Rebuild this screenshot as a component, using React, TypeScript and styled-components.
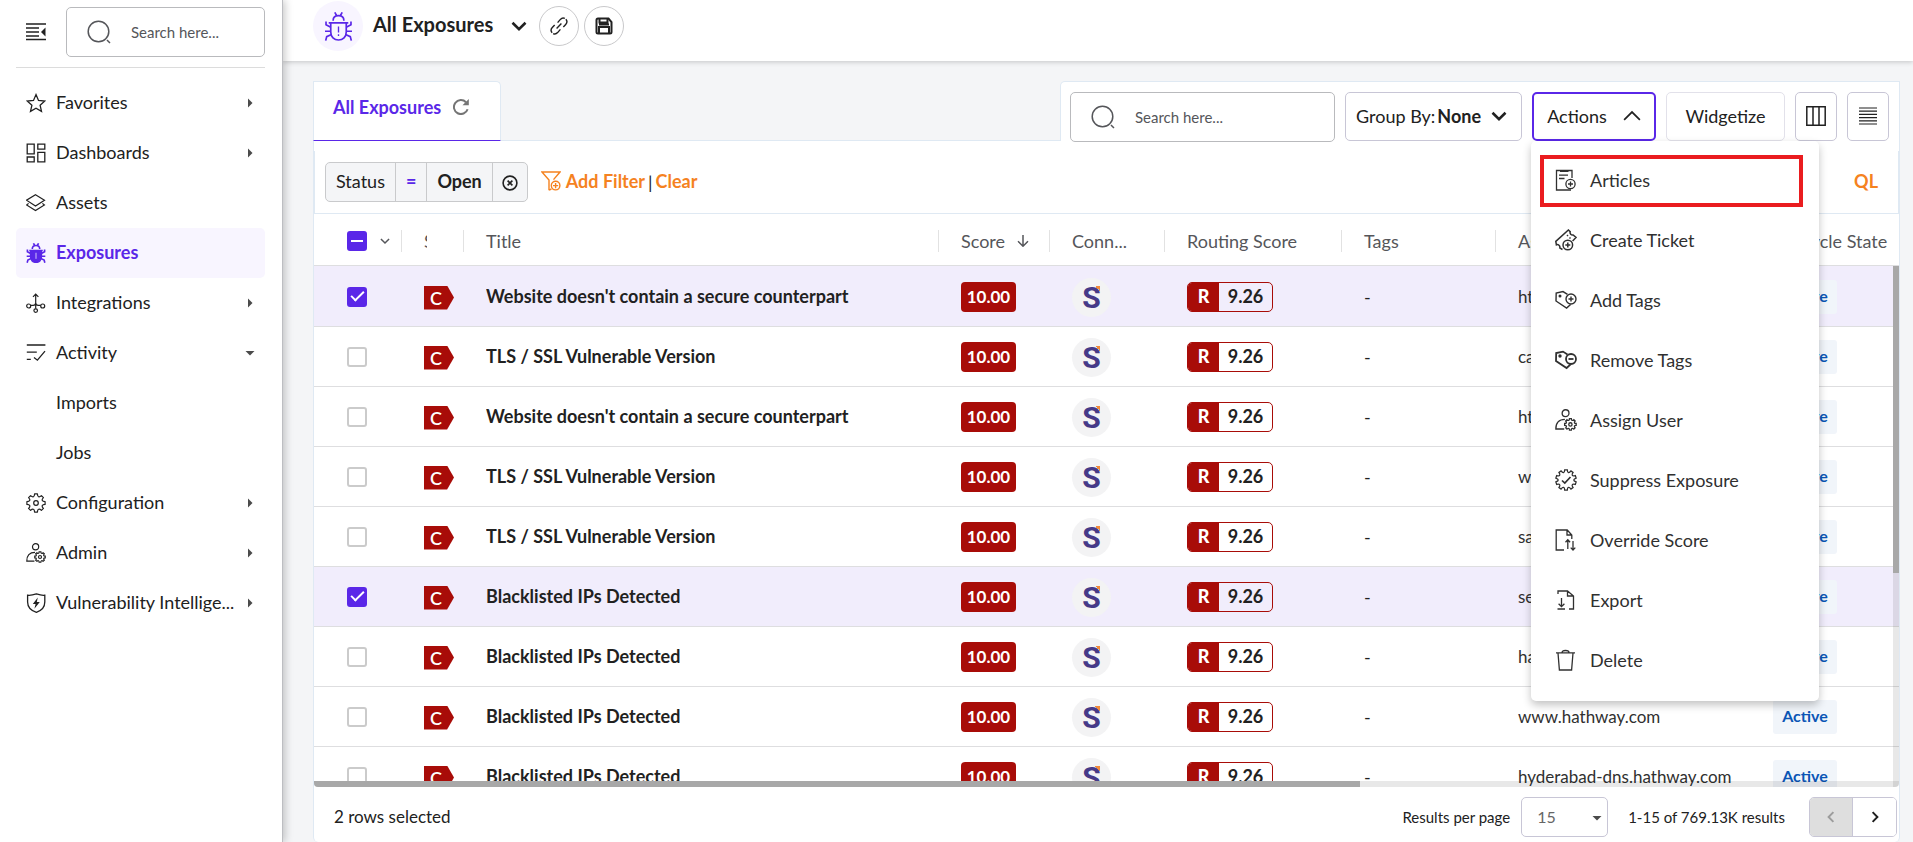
import React from "react";
import styled, { createGlobalStyle, css } from "styled-components";

const color = {
  purple: "#5a27e8",
  lilac: "#f8f5ff",
  rowOn: "#f1edfc",
  orange: "#f5821f",
  red: "#a80c08",
  ink: "#212121",
  soft: "#55565a",
  line: "#dedee0",
  pale: "#dfe9f3",
  page: "#f4f5f7",
};

const Global = createGlobalStyle`
  *, *::before, *::after { box-sizing: border-box; }
  html, body { margin: 0; padding: 0; }
  body { background: ${color.page}; overflow: hidden; }
  body, button, input, select { font-family: Lato, "Open Sans", sans-serif; color: ${color.ink}; }
  button { padding: 0; cursor: pointer; }
  svg { display: block; flex: none; }
`;

/* ---------- icons ---------- */

const gear = (teeth: number, outer: number, inner: number, cx = 10, cy = 10) => {
  const step = (Math.PI * 2) / teeth;
  const at = (r: number, a: number) =>
    `${(cx + r * Math.cos(a)).toFixed(2)} ${(cy + r * Math.sin(a)).toFixed(2)}`;
  let d = "";
  for (let i = 0; i < teeth; i++) {
    const a = i * step - Math.PI / 2;
    d += `${i ? "L" : "M"}${at(outer, a - step * 0.2)}L${at(outer, a + step * 0.2)}`;
    d += `Q${at(inner, a + step * 0.28)} ${at(inner, a + step * 0.5)}`;
    d += `Q${at(inner, a + step * 0.72)} ${at(outer, a + step * 0.8)}`;
  }
  return d + "Z";
};

type IconProps = { size?: number; children: React.ReactNode; width?: number; box?: string };
const Icon = ({ size = 20, children, width = 1.3, box = "0 0 20 20" }: IconProps) => (
  <svg width={size} height={size} viewBox={box} fill="none" stroke="currentColor" strokeWidth={width} aria-hidden="true">
    {children}
  </svg>
);

const FoldIcon = () => (
  <Icon width={1.4}>
    <path d="M0 2h20M0 6h13M0 10h13M0 14h13M0 17.5h20" />
    <path d="M19.5 5.5v9L15 10z" fill="currentColor" stroke="none" />
  </Icon>
);
const StarIcon = () => (
  <Icon><path d="M10 1.6l2.5 5.8 6.3.6-4.7 4.2 1.4 6.2L10 15.2l-5.5 3.2 1.4-6.2L1.2 8l6.3-.6z" /></Icon>
);
const BoardIcon = () => (
  <Icon><path d="M1.2 1.2h7v9.6h-7zM11.8 1.2h7v5h-7zM1.2 14h7v4.8h-7zM11.8 9.4h7v9.4h-7z" /></Icon>
);
const LayersIcon = () => (
  <Icon width={1.2}>
    <path d="M9.5 1.8l9 5.4-9 5.8-9-5.8z" />
    <path d="M2.6 10.4L.6 12l8.9 5.6 8.9-5.6-2-1.6" />
  </Icon>
);
const BugIcon = ({ size = 20, solid = false }: { size?: number; solid?: boolean }) => (
  <Icon size={size} box="-3 0 86 86" width={solid ? 7 : 5}>
    <path d="M29 1l5 9M51 1l-5 9M24 26c0-10 4-15 16-15s16 5 16 15" />
    <path d="M11 32h58M17 33v26c0 15 10 24 23 24s23-9 23-24V33" fill={solid ? "currentColor" : "none"} />
    <path d="M3 28v10l14 7M77 28v10l-14 7M0 57h16M64 57h16M19 67L5 73 2 85M61 67l14 6 3 12" />
    {solid ? <path d="M40 42v26" stroke="#d9cdfb" strokeWidth={4} /> : <path d="M40 43v18M40 66v5" strokeWidth={4} />}
  </Icon>
);
const NodesIcon = () => (
  <Icon width={1.2}>
    <circle cx="2.7" cy="13" r="2" /><circle cx="16.7" cy="13" r="2" /><circle cx="9.7" cy="17.6" r="1.8" />
    <path d="M9.7 15.8V1M7 3.8L9.700 1l2.700 2.800M4.700 12.400h2.400c2 0 2.600-1.200 2.600-2.600 0 1.400.6 2.600 2.600 2.600h2.400" />
  </Icon>
);
const ActivityIcon = () => (
  <Icon width={1.3}><path d="M.8 2h18.6M.8 9.2h10M.8 16.4h4M8 14.4l3.4 2.8 7.6-9" /></Icon>
);
const GearIcon = () => (
  <Icon width={1.2}><path d={gear(8, 9.2, 6.8)} strokeLinejoin="round" /><circle cx="10" cy="10" r="2.3" /></Icon>
);
const UserGearIcon = ({ size = 20 }: { size?: number }) => (
  <Icon width={1.2} size={size}>
    <circle cx="9.6" cy="3.8" r="3.1" />
    <path d="M8.4 18.2H.8C.6 12.6 3.6 9.4 9 9.4" />
    <path d={gear(8, 5.3, 4, 14, 14)} /><circle cx="14" cy="14" r="1.5" />
  </Icon>
);
const ShieldIcon = () => (
  <Icon>
    <path d="M1.6 2.2C4.6 2.6 7 2 10.4.9c3.4 1.1 5.8 1.7 8.4 1.3V9c0 5.6-3.4 8.6-8.4 10.3C5 17.6 1.6 14.6 1.6 9z" />
    <path d="M11.8 4.4L6.8 11h2.8L8.4 15.8 13.8 9h-3z" fill="currentColor" stroke="none" />
  </Icon>
);
const SearchIcon = () => (
  <Icon size={24} box="0 0 24 24" width={1.5}><circle cx="11.5" cy="11.5" r="10.3" /><path d="M20 20l3 3" /></Icon>
);
const Chevron = ({ size = 16, width = 2.6, up = false }: { size?: number; width?: number; up?: boolean }) => (
  <Icon size={size} box="0 0 16 16" width={width}><path d={up ? "M1 11.5l7-7 7 7" : "M1.5 4.8L8 11.2l6.5-6.4"} /></Icon>
);
const Caret = ({ open = false }: { open?: boolean }) => (
  <Icon size={10} box="0 0 10 10"><path d={open ? "M.5 3h9L5 7.5z" : "M3 .5v9L7.5 5z"} fill="#4b4b4b" stroke="none" /></Icon>
);
const LinkIcon = () => (
  <Icon size={18} box="0 0 18 18" width={1.4}>
    <path d="M7.6 5.6l2.8-3.2c1.5-1.6 3.8-1.7 5.3-.3 1.5 1.5 1.4 3.8 0 5.3l-2.8 3M10.4 12.4l-2.8 3.2c-1.5 1.6-3.8 1.7-5.3.3-1.5-1.5-1.4-3.8 0-5.3l2.8-3M6.6 11.4l4.8-4.8" strokeDasharray="9 1.2" />
  </Icon>
);
const SaveIcon = () => (
  <Icon size={18} box="0 0 18 18" width={2}>
    <path d="M1.5 3c0-1 .5-1.5 1.5-1.5h10.5L16.5 5v10c0 1-.5 1.5-1.5 1.5H3c-1 0-1.5-.5-1.5-1.5z" />
    <path d="M4.5 2v3.5h8V2M4 16v-6h10v6M4 7.5h10" />
  </Icon>
);
const RefreshIcon = () => (
  <Icon size={16} box="0 0 16 16" width={2}>
    <path d="M14.6 10.2A7 7 0 1 1 13 3.2" /><path d="M15.8 0v6.3H9.5z" fill="currentColor" stroke="none" />
  </Icon>
);
const FilterIcon = () => (
  <Icon width={1.4}>
    <path d="M8 19.2V9L1 1h18l-6.5 7.6M8 19.2l2.4-1.2" /><circle cx="14.6" cy="14.6" r="4.3" /><path d="M12 14.6h5.2M14.6 12v5.2" />
  </Icon>
);
const RemoveIcon = () => (
  <Icon size={16} box="0 0 16 16" width={1.6}><circle cx="8" cy="8" r="6.9" /><path d="M5.6 5.6l4.8 4.8M10.4 5.6l-4.8 4.8" /></Icon>
);
const SortIcon = () => (
  <Icon size={12} box="0 0 12 12" width={1.5}><path d="M6 0v11M1 6.2l5 5 5-5" /></Icon>
);
const ColumnsIcon = () => (
  <Icon width={1.5}><path d="M.8.8h18.4v18.4H.8zM7 1v18M13 1v18" /></Icon>
);
const RowsIcon = () => (
  <Icon size={18} box="0 0 18 18" width={1.2}><path d="M0 1h18M0 4.2h18M0 7.4h18M0 10.6h18M0 13.8h18M0 17h18" /></Icon>
);
const ArticleIcon = () => (
  <Icon size={22} box="0 0 22 22">
    <path d="M17 9V1.5H1.5V21H16M4 6.2h9M4 9.5h5.5" /><path d="M5 2h8.5" strokeWidth={2} />
    <circle cx="15.5" cy="15" r="4.6" /><path d="M13 15h5M15.5 12.5v5" />
  </Icon>
);
const TicketIcon = () => (
  <Icon size={22} box="0 0 22 22" width={1.5}>
    <path d="M7.5 20.5l-2.7-1.6c.6-2-1.6-4-3.4-3L.8 12.400 13.400 1l1.800 1.800c-.6 1.800 1 3.700 3 3.200l2.800 2.400-3.400 3.600M12 6l1 1M14.500 8.500l1 1" />
    <circle cx="12.8" cy="16" r="4.8" /><path d="M10.3 16h5M12.8 13.5v5" />
  </Icon>
);
const TagIcon = ({ minus = false }: { minus?: boolean }) => (
  <Icon size={22} box="0 0 22 22" width={minus ? 1.8 : 1.4}>
    <path d="M12.5 5.4L8 2.6 1.2 4 1 12l10.6 7 4-3.6" /><circle cx="5" cy="7" r=".8" fill="currentColor" />
    <circle cx="16" cy="10" r="5" /><path d={minus ? "M13.5 10h5" : "M13.5 10h5M16 7.5v5"} />
  </Icon>
);
const BadgeIcon = () => (
  <Icon size={22} box="0 0 22 22"><path d={gear(10, 10.3, 7.8, 11, 11)} /><path d="M7 11.5l2.8 2.6L15.5 8" strokeWidth={1.7} /></Icon>
);
const OverrideIcon = () => (
  <Icon size={22} box="0 0 22 22">
    <path d="M9 21H1.2V1h11l4.6 5v4M12 1v5h5M12.8 20v-9M10.5 13.3l2.3-2.5 2.3 2.5M18 12v9M15.7 18.6L18 21l2.3-2.4" />
  </Icon>
);
const ExportIcon = () => (
  <Icon size={22} box="0 0 22 22">
    <path d="M3 5V2h9.5l6 5v13H14M12.5 2v5h6M6.5 9v8.5M3.6 14.8l2.9 2.8 2.9-2.8M2.5 20H10" />
  </Icon>
);
const TrashIcon = () => (
  <Icon size={22} box="0 0 22 22"><path d="M1 3.8h19M7 3.6C7 2 8 1.5 10.5 1.5S14 2 14 3.6M3 4l1.4 17h12.2L18 4" /></Icon>
);

/* ---------- shell ---------- */

const Shell = styled.div`
  display: flex;
  height: 100vh;
  min-width: 1280px;
`;
const Sidebar = styled.nav`
  flex: 0 0 283px;
  min-width: 0;
  padding: 7px 17px 0 16px;
  background: #fff;
  border-right: 1px solid #bdbec2;
  box-shadow: 2px 0 8px rgba(0, 0, 0, 0.22);
  z-index: 3;
`;
const SideTop = styled.div`
  display: flex;
  align-items: center;
  gap: 20px;
  padding: 0 0 10px 10px;
  margin-bottom: 10px;
  border-bottom: 1px solid #dcdcdc;
`;
const PlainButton = styled.button`
  border: 0;
  background: none;
  color: inherit;
`;
const Search = styled.label<{ $width?: number }>`
  display: flex;
  align-items: center;
  flex: ${(p) => (p.$width ? `0 0 ${p.$width}px` : "1")};
  min-width: 0;
  height: 50px;
  padding: 0 20px;
  gap: 20px;
  background: #fff;
  border: 1px solid #b9babd;
  border-radius: 5px;
  color: ${color.soft};
  input {
    flex: 1;
    min-width: 0;
    border: 0;
    padding: 0;
    outline: 0;
    background: none;
    font-size: 15px;
  }
  input::placeholder { color: ${color.soft}; opacity: 1; }
`;
const NavList = styled.ul`
  list-style: none;
  margin: 0;
  padding: 0;
`;
const NavLink = styled.a<{ $active?: boolean }>`
  display: flex;
  align-items: center;
  gap: 10px;
  height: 50px;
  padding: 0 10px;
  border-radius: 5px;
  font-size: 18px;
  text-decoration: none;
  color: ${color.ink};
  ${(p) => p.$active && css`
    background: ${color.lilac};
    color: ${color.purple};
    font-weight: 700;
  `}
`;
const NavIcon = styled.span`
  flex: 0 0 20px;
`;
const NavText = styled.span`
  padding-bottom: 2px;
  white-space: nowrap;
`;
const NavCaret = styled.span`
  margin-left: auto;
`;
const Content = styled.div`
  flex: 1;
  min-width: 0;
  display: flex;
  flex-direction: column;
`;
const Header = styled.header`
  display: flex;
  align-items: center;
  flex: 0 0 61px;
  padding: 0 30px 9px;
  background: #fff;
  box-shadow: 0 1px 5px rgba(0, 0, 0, 0.2);
  z-index: 1;
`;
const BugDisc = styled.span`
  display: grid;
  place-items: center;
  width: 50px;
  height: 50px;
  border-radius: 50%;
  background: ${color.lilac};
  color: ${color.purple};
`;
const PageTitle = styled.h1`
  margin: 0 18px 4px 10px;
  font-size: 20px;
  font-weight: 700;
  line-height: 24px;
`;
const RoundButton = styled.button`
  display: grid;
  place-items: center;
  width: 40px;
  height: 40px;
  border: 1px solid #c9c9cb;
  border-radius: 50%;
  background: #fff;
`;
const RoundGroup = styled.div`
  display: flex;
  gap: 5px;
  margin-left: 12px;
`;
const Main = styled.main`
  flex: 1;
  min-height: 0;
  display: flex;
  flex-direction: column;
  padding: 20px 13px 0 30px;
`;

/* ---------- tabs and toolbar ---------- */

const TopRow = styled.div`
  display: flex;
  flex: 0 0 60px;
  min-height: 0;
`;
const Tab = styled.button`
  display: flex;
  align-items: center;
  gap: 12px;
  padding: 0 31px 8px 19px;
  background: #fff;
  border: 1px solid ${color.pale};
  border-bottom: 1px solid ${color.purple};
  border-top-right-radius: 5px;
  color: ${color.purple};
  font-size: 18px;
  font-weight: 700;
  svg { color: #757575; }
`;
const TabFill = styled.div`
  flex: 1;
  border-bottom: 1px solid ${color.pale};
`;
const Toolbar = styled.div`
  position: relative;
  display: flex;
  align-items: flex-start;
  gap: 10px;
  padding: 10px 10px 0 9px;
  background: #fff;
  border: 1px solid ${color.pale};
  border-bottom: 0;
  border-top-left-radius: 5px;
`;
const ToolButton = styled.button<{ $width: number; $tone?: "active" | "faint" }>`
  display: flex;
  align-items: center;
  justify-content: center;
  flex: 0 0 ${(p) => p.$width}px;
  height: 49px;
  padding-bottom: 2px;
  background: #fff;
  border: 1px solid #c8c6d6;
  border-radius: 5px;
  font-size: 18px;
  white-space: nowrap;
  ${(p) => p.$tone === "active" && css`border: 2px solid ${color.purple};`}
  ${(p) => p.$tone === "faint" && css`border-color: #e2e1ea;`}
  b { margin: 0 10px 0 2px; }
`;
const GroupButton = styled(ToolButton)`
  justify-content: flex-start;
  padding-left: 10px;
`;
const ActionsLabel = styled.span`
  margin-right: 16px;
`;
const ActionsWrap = styled.div`
  position: relative;
  display: flex;
`;
const Menu = styled.ul`
  position: absolute;
  z-index: 2;
  top: 49px;
  left: -1px;
  width: 288px;
  margin: 0;
  padding: 10px 9px;
  list-style: none;
  background: #fff;
  border-radius: 5px;
  box-shadow: 0 4px 8px rgba(0, 0, 0, 0.24);
`;
const MenuRow = styled.li`
  padding: 4px 0;
`;
const MenuItem = styled.button<{ $marked?: boolean }>`
  display: flex;
  align-items: center;
  gap: 13px;
  width: 263px;
  height: 52px;
  padding: 0 0 2px 11px;
  border: 4px solid ${(p) => (p.$marked ? "#ea1c1f" : "transparent")};
  background: none;
  font-size: 18px;
  color: #303030;
`;

/* ---------- panel ---------- */

const Panel = styled.section`
  flex: 1;
  min-height: 0;
  display: flex;
  flex-direction: column;
  background: #fff;
  border: 1px solid ${color.pale};
  border-width: 0 1px;
  border-radius: 0 0 5px 5px;
`;
const FilterBar = styled.div`
  display: flex;
  align-items: center;
  flex: 0 0 63px;
  margin-top: 10px;
  padding: 0 20px 0 10px;
  border: 1px solid ${color.pale};
  border-top: 0;
  font-size: 18px;
`;
const Chip = styled.div`
  display: flex;
  height: 40px;
  background: ${color.page};
  border: 1px solid #c9cacc;
  border-radius: 5px;
`;
const ChipPart = styled.span<{ $strong?: boolean }>`
  display: flex;
  align-items: center;
  padding: 0 10px 2px;
  border-right: 1px solid #c9cacc;
  font-weight: ${(p) => (p.$strong ? 700 : 400)};
`;
const ChipOperator = styled(ChipPart)`
  color: ${color.purple};
  font-weight: 700;
`;
const ChipRemove = styled(PlainButton)`
  padding: 2px 9px 0;
`;
const OrangeButton = styled(PlainButton)`
  display: flex;
  align-items: center;
  gap: 5px;
  padding-bottom: 2px;
  color: ${color.orange};
  font-size: 18px;
  font-weight: 700;
`;
const FilterLinks = styled.div`
  display: flex;
  align-items: center;
  gap: 3px;
  margin-left: 13px;
  flex: 1;
`;

const TableArea = styled.div`
  position: relative;
  flex: 1;
  min-height: 0;
  overflow: hidden;
  border-radius: 0 0 4px 4px;
`;
const Grid = styled.table`
  width: 100%;
  table-layout: fixed;
  border-collapse: separate;
  border-spacing: 0;
  font-size: 18px;
`;
const HeadCell = styled.th<{ $divided?: boolean }>`
  height: 52px;
  padding: 2px 0 0;
  border-bottom: 1px solid ${color.line};
  font-weight: 400;
  text-align: left;
  color: ${color.soft};
  white-space: nowrap;
  > div {
    display: flex;
    align-items: center;
    gap: 12px;
    height: 22px;
    padding-left: 22px;
    line-height: 22px;
    border-right: 1px solid ${(p) => (p.$divided ? "#e2e2e2" : "transparent")};
  }
`;
const Clipped = styled.span<{ $width: number }>`
  width: ${(p) => p.$width}px;
  overflow: hidden;
  text-overflow: clip;
`;
const Row = styled.tr<{ $on: boolean; $first: boolean }>`
  background: ${(p) => (p.$on ? color.rowOn : "#fff")};
  td {
    height: 60px;
    padding: 0 0 0 22px;
    border-top: 1px solid ${(p) => (p.$first ? color.rowOn : color.line)};
    white-space: nowrap;
  }
`;
const CheckCell = styled.div`
  display: flex;
  align-items: center;
  gap: 13px;
  padding-left: 11px;
`;
const CheckBox = styled.input<{ $mixed?: boolean }>`
  appearance: none;
  display: grid;
  place-items: center;
  flex: none;
  width: 20px;
  height: 20px;
  margin: 0;
  border: 2px solid #cbcbcb;
  border-radius: 3px;
  background: #fff;
  &:checked {
    background: ${color.purple};
    border-color: ${color.purple};
  }
  &:checked::before {
    content: "";
    ${(p) => p.$mixed
      ? css`width: 12px; height: 2px; background: #fff;`
      : css`width: 13px; height: 7px; margin-bottom: 4px; border: solid #fff; border-width: 0 0 2px 2px; transform: rotate(-45deg);`}
  }
`;
const Severity = styled.span`
  display: block;
  width: 30px;
  height: 24px;
  margin-top: 2px;
  padding-left: 6px;
  background: ${color.red};
  color: #fff;
  font-size: 18px;
  font-weight: 600;
  line-height: 24px;
  clip-path: polygon(0 0, 77% 0, 100% 50%, 77% 100%, 0 100%);
`;
const Title = styled.span`
  display: block;
  padding-bottom: 2px;
  font-weight: 700;
  overflow: hidden;
  text-overflow: ellipsis;
`;
const Score = styled.span`
  display: grid;
  place-items: center;
  width: 55px;
  height: 30px;
  padding-bottom: 1px;
  border-radius: 4px;
  background: ${color.red};
  color: #fff;
  font-size: 17px;
  font-weight: 700;
`;
const Connector = styled.span`
  position: relative;
  display: grid;
  place-items: center;
  width: 39px;
  height: 39px;
  margin-top: 2px;
  border-radius: 50%;
  background: #f3f3f4;
  color: #463a88;
  font-family: Roboto, "Liberation Sans", sans-serif;
  font-size: 30px;
  font-weight: 700;
  line-height: 39px;
  &::after {
    content: "";
    position: absolute;
    top: 8px;
    right: 11px;
    width: 5px;
    height: 5px;
    background: linear-gradient(to bottom left, #f08a3c 50%, transparent 50%);
  }
`;
const Routing = styled.span`
  display: flex;
  width: 86px;
  height: 30px;
  border: 1px solid ${color.red};
  border-radius: 5px;
  font-weight: 700;
  line-height: 26px;
  overflow: hidden;
  text-align: center;
  b {
    flex: 0 0 31px;
    background: ${color.red};
    color: #fff;
  }
  span { flex: 1; }
`;
const Asset = styled.span`
  display: block;
  padding-bottom: 1px;
  font-size: 17px;
  color: #303030;
`;
const State = styled.span`
  display: grid;
  place-items: center;
  width: 64px;
  height: 34px;
  padding-bottom: 2px;
  border-radius: 3px;
  background: #f1f5fa;
  color: #0b55b5;
  font-size: 16px;
  font-weight: 700;
`;
const ScrollTrack = styled.div<{ $axis: "x" | "y" }>`
  position: absolute;
  right: 0;
  bottom: 0;
  background: rgba(0, 0, 0, 0.09);
  ${(p) => (p.$axis === "x" ? "left: 0; height: 6px;" : "top: 52px; width: 6px;")}
`;
const ScrollThumb = styled.div<{ $axis: "x" | "y" }>`
  background: #a8a8a8;
  ${(p) => (p.$axis === "x" ? "width: 66%; height: 6px;" : "width: 6px; height: 59%;")}
`;

const Footer = styled.footer`
  display: flex;
  align-items: center;
  flex: 0 0 55px;
  padding: 4px 2px 0 20px;
  font-size: 15px;
`;
const Selected = styled.span`
  flex: 1;
  font-size: 17px;
`;
const SizeLabel = styled.label`
  display: flex;
  align-items: center;
  gap: 11px;
`;
const SelectBox = styled.span`
  position: relative;
  svg {
    position: absolute;
    top: 16px;
    right: 6px;
    pointer-events: none;
  }
`;
const SizeSelect = styled.select`
  appearance: none;
  width: 87px;
  height: 40px;
  padding: 0 15px;
  background: #fff;
  border: 1px solid #c8c6d6;
  border-radius: 5px;
  color: #666;
  font-size: 16px;
`;
const Range = styled.span`
  margin: 0 24px 0 20px;
`;
const Pager = styled.div`
  display: flex;
  height: 40px;
  border: 1px solid #c8c6d6;
  border-radius: 5px;
  overflow: hidden;
`;
const PageButton = styled.button`
  display: grid;
  place-items: center;
  width: 43px;
  border: 0;
  background: #fff;
  &:disabled { background: #dedede; color: #9d9d9d; border-right: 1px solid #c8c6d6; }
  svg { transform: rotate(-90deg); }
  &:disabled svg { transform: rotate(90deg); }
`;

/* ---------- data ---------- */

type Nav = { label: string; icon?: React.ReactNode; caret?: "closed" | "open"; active?: boolean };
const nav: Nav[] = [
  { label: "Favorites", icon: <StarIcon />, caret: "closed" },
  { label: "Dashboards", icon: <BoardIcon />, caret: "closed" },
  { label: "Assets", icon: <LayersIcon /> },
  { label: "Exposures", icon: <BugIcon solid />, active: true },
  { label: "Integrations", icon: <NodesIcon />, caret: "closed" },
  { label: "Activity", icon: <ActivityIcon />, caret: "open" },
  { label: "Imports" },
  { label: "Jobs" },
  { label: "Configuration", icon: <GearIcon />, caret: "closed" },
  { label: "Admin", icon: <UserGearIcon />, caret: "closed" },
  { label: "Vulnerability Intellige...", icon: <ShieldIcon />, caret: "closed" },
];

const actions: [string, React.ReactNode][] = [
  ["Articles", <ArticleIcon />],
  ["Create Ticket", <TicketIcon />],
  ["Add Tags", <TagIcon />],
  ["Remove Tags", <TagIcon minus />],
  ["Assign User", <UserGearIcon size={22} />],
  ["Suppress Exposure", <BadgeIcon />],
  ["Override Score", <OverrideIcon />],
  ["Export", <ExportIcon />],
  ["Delete", <TrashIcon />],
];

const website = "Website doesn't contain a secure counterpart";
const tls = "TLS / SSL Vulnerable Version";
const blacklisted = "Blacklisted IPs Detected";
const rows: { title: string; asset: string; on?: boolean }[] = [
  { title: website, asset: "https", on: true },
  { title: tls, asset: "cas" },
  { title: website, asset: "https" },
  { title: tls, asset: "www" },
  { title: tls, asset: "sa" },
  { title: blacklisted, asset: "se", on: true },
  { title: blacklisted, asset: "ha" },
  { title: blacklisted, asset: "www.hathway.com" },
  { title: blacklisted, asset: "hyderabad-dns.hathway.com" },
];
const widths = [88, 62, 0, 111, 115, 177, 154, 255, 148];

export default function App() {
  return (
    <>
      <Global />
      <Shell>
        <Sidebar>
          <SideTop>
            <PlainButton aria-label="Collapse menu"><FoldIcon /></PlainButton>
            <Search><SearchIcon /><input type="search" placeholder="Search here..." aria-label="Search menu" /></Search>
          </SideTop>
          <NavList>
            {nav.map((n) => (
              <li key={n.label}>
                <NavLink href="#" $active={n.active}>
                  <NavIcon>{n.icon}</NavIcon>
                  <NavText>{n.label}</NavText>
                  {n.caret && <NavCaret><Caret open={n.caret === "open"} /></NavCaret>}
                </NavLink>
              </li>
            ))}
          </NavList>
        </Sidebar>
        <Content>
          <Header>
            <BugDisc><BugIcon size={29} /></BugDisc>
            <PageTitle>All Exposures</PageTitle>
            <PlainButton aria-label="Choose view"><Chevron /></PlainButton>
            <RoundGroup>
              <RoundButton aria-label="Copy link"><LinkIcon /></RoundButton>
              <RoundButton aria-label="Save view"><SaveIcon /></RoundButton>
            </RoundGroup>
          </Header>
          <Main>
            <TopRow>
              <Tab>All Exposures <RefreshIcon /></Tab>
              <TabFill />
              <Toolbar>
                <Search $width={265}><SearchIcon /><input type="search" placeholder="Search here..." aria-label="Search exposures" /></Search>
                <GroupButton $width={177}>Group By:<b>None</b><Chevron /></GroupButton>
                <ActionsWrap>
                  <ToolButton $width={124} $tone="active" aria-expanded="true">
                    <ActionsLabel>Actions</ActionsLabel><Chevron up width={1.5} size={18} />
                  </ToolButton>
                  <Menu>
                    {actions.map(([label, icon], i) => (
                      <MenuRow key={label}><MenuItem $marked={i === 0}>{icon}{label}</MenuItem></MenuRow>
                    ))}
                  </Menu>
                </ActionsWrap>
                <ToolButton $width={119} $tone="faint">Widgetize</ToolButton>
                <ToolButton $width={42} aria-label="Columns"><ColumnsIcon /></ToolButton>
                <ToolButton $width={42} aria-label="Row density"><RowsIcon /></ToolButton>
              </Toolbar>
            </TopRow>
            <Panel>
              <FilterBar>
                <Chip>
                  <ChipPart>Status</ChipPart>
                  <ChipOperator>=</ChipOperator>
                  <ChipPart $strong>Open</ChipPart>
                  <ChipRemove aria-label="Remove filter"><RemoveIcon /></ChipRemove>
                </Chip>
                <FilterLinks>
                  <OrangeButton><FilterIcon />Add Filter</OrangeButton>
                  <span>|</span>
                  <OrangeButton>Clear</OrangeButton>
                </FilterLinks>
                <OrangeButton>QL</OrangeButton>
              </FilterBar>
              <TableArea>
                <Grid>
                  <colgroup>
                    {widths.map((w, i) => <col key={i} width={w || undefined} />)}
                  </colgroup>
                  <thead>
                    <tr>
                      <HeadCell $divided>
                        <div>
                          <CheckCell>
                            <CheckBox type="checkbox" defaultChecked $mixed aria-label="Select all rows" />
                            <Chevron size={10} width={2.4} />
                          </CheckCell>
                        </div>
                      </HeadCell>
                      <HeadCell $divided><div><Clipped $width={3}>S</Clipped></div></HeadCell>
                      <HeadCell $divided><div>Title</div></HeadCell>
                      <HeadCell $divided><div>Score <SortIcon /></div></HeadCell>
                      <HeadCell $divided><div>Conn...</div></HeadCell>
                      <HeadCell $divided><div>Routing Score</div></HeadCell>
                      <HeadCell $divided><div>Tags</div></HeadCell>
                      <HeadCell $divided><div>Asset</div></HeadCell>
                      <HeadCell><div>Lifecycle State</div></HeadCell>
                    </tr>
                  </thead>
                  <tbody>
                    {rows.map((r, i) => (
                      <Row key={i} $on={!!r.on} $first={i === 0}>
                        <td><CheckCell><CheckBox type="checkbox" defaultChecked={r.on} aria-label={`Select row ${i + 1}`} /></CheckCell></td>
                        <td><Severity>C</Severity></td>
                        <td><Title>{r.title}</Title></td>
                        <td><Score>10.00</Score></td>
                        <td><Connector>S</Connector></td>
                        <td><Routing><b>R</b><span>9.26</span></Routing></td>
                        <td>-</td>
                        <td><Asset>{r.asset}</Asset></td>
                        <td><State>Active</State></td>
                      </Row>
                    ))}
                  </tbody>
                </Grid>
                <ScrollTrack $axis="y"><ScrollThumb $axis="y" /></ScrollTrack>
                <ScrollTrack $axis="x"><ScrollThumb $axis="x" /></ScrollTrack>
              </TableArea>
              <Footer>
                <Selected>2 rows selected</Selected>
                <SizeLabel>
                  Results per page
                  <SelectBox>
                    <SizeSelect defaultValue="15"><option>15</option><option>30</option></SizeSelect>
                    <Caret open />
                  </SelectBox>
                </SizeLabel>
                <Range>1-15 of 769.13K results</Range>
                <Pager>
                  <PageButton disabled aria-label="Previous page"><Chevron size={12} /></PageButton>
                  <PageButton aria-label="Next page"><Chevron size={12} /></PageButton>
                </Pager>
              </Footer>
            </Panel>
          </Main>
        </Content>
      </Shell>
    </>
  );
}
